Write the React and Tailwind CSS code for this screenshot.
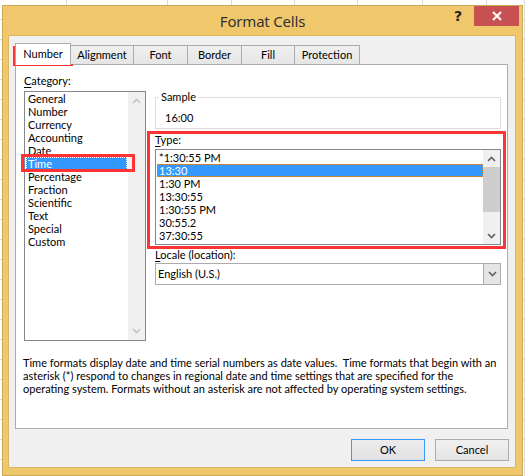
import React from "react";

const FONT = "font-['Lato','Noto_Sans',sans-serif]";

function Chevron({ dir = "up", color = "#606060" }) {
  return (
    <svg width="9" height="6" viewBox="0 0 9 6">
      {dir === "up" ? (
        <polyline points="1,5 4.5,1.5 8,5" fill="none" stroke={color} strokeWidth="1.6" />
      ) : (
        <polyline points="1,1 4.5,4.5 8,1" fill="none" stroke={color} strokeWidth="1.6" />
      )}
    </svg>
  );
}

const categories = [
  "General",
  "Number",
  "Currency",
  "Accounting",
  "Date",
  "Time",
  "Percentage",
  "Fraction",
  "Scientific",
  "Text",
  "Special",
  "Custom",
];

const types = [
  "*1:30:55 PM",
  "13:30",
  "1:30 PM",
  "13:30:55",
  "1:30:55 PM",
  "30:55.2",
  "37:30:55",
];

const gridCols = [67, 101, 64, 63, 63, 65, 64, 38];

export default function App() {
  return (
    <div className={`relative w-[525px] h-[476px] overflow-hidden bg-white text-[11px] text-black ${FONT}`}>
      {/* spreadsheet grid behind the dialog */}
      <div className="flex h-full bg-[repeating-linear-gradient(to_bottom,transparent_0px,transparent_19px,#dadada_19px,#dadada_20px)]">
        {gridCols.map((w, i) => (
          <div key={i} className="h-full border-r border-[#dadada]" style={{ width: w }} />
        ))}
      </div>

      {/* dialog window */}
      <div className="absolute left-[2px] top-[5px] w-[521px] h-[471px] border border-[#c9a858] bg-[#f0c86b] flex flex-col">
        {/* title bar */}
        <div className="relative h-[29px] flex items-center justify-center">
          <span className="text-[15px] text-[#333] leading-none mt-[1px] font-['Noto_Sans',sans-serif] tracking-[-0.2px]">Format Cells</span>
          <div className="absolute right-[3px] top-0 flex items-start">
            <span className="w-[20px] text-center font-bold text-[14px] leading-[20px] text-[#222] mr-[6px] font-['DejaVu_Sans',sans-serif]">?</span>
            <div className="w-[45px] h-[20px] bg-[#c75050] flex items-center justify-center">
              <svg width="10" height="10" viewBox="0 0 10 10">
                <path d="M1 1 L9 9 M9 1 L1 9" stroke="#fff" strokeWidth="2" />
              </svg>
            </div>
          </div>
        </div>

        {/* client area */}
        <div className="ml-[5px] w-[508px] h-[433px] bg-[#f0f0f0] border border-[#d9b764] flex flex-col">
          {/* tabs */}
          <div className="mt-[7px] ml-[6px] h-[21px] flex items-end relative z-10">
            <div className="h-[22px] w-[56px] -mb-[1px] bg-white border border-b-0 border-[#acacac] flex items-center justify-center pb-[1px]">
              Number
            </div>
            {[
              ["Alignment", 63],
              ["Font", 54],
              ["Border", 54],
              ["Fill", 53],
              ["Protection", 65],
            ].map(([t, w]) => (
              <div
                key={t}
                className="h-[19px] border border-b-0 border-l-0 border-[#acacac] bg-[linear-gradient(#f0f0f0,#e5e5e5)] flex items-center justify-center"
                style={{ width: w }}
              >
                {t}
              </div>
            ))}
          </div>

          {/* tab panel */}
          <div className="ml-[6px] w-[493px] h-[365px] bg-white border border-[#acacac] flex flex-col">
            <div className="flex">
              {/* left column */}
              <div className="ml-[8px] w-[122px] flex flex-col">
                <div className="mt-[9px] h-[13px] leading-[13px]">
                  <span className="underline underline-offset-2">C</span>ategory:
                </div>
                <div className="mt-[4px] h-[250px] border border-[#828790] flex">
                  <div className="flex-1 flex flex-col">
                    {categories.map((c) => (
                      <div
                        key={c}
                        className={
                          c === "Time"
                            ? "h-[13px] leading-[13px] pl-[2px] ml-[1px] mr-[1px] bg-[#3399ff] text-white outline outline-1 outline-dotted outline-[#ffffff] -outline-offset-1"
                            : "h-[13px] leading-[13px] pl-[2px] ml-[1px]"
                        }
                      >
                        {c}
                      </div>
                    ))}
                  </div>
                  <div className="w-[17px] bg-[#f0f0f0] flex flex-col justify-between items-center py-[6px]">
                    <Chevron dir="up" color="#c4c4c4" />
                    <Chevron dir="down" color="#c4c4c4" />
                  </div>
                </div>
              </div>

              {/* right column */}
              <div className="ml-[9px] w-[346px] flex flex-col">
                <div className="relative mt-[32px] h-[32px] border border-[#dcdcdc]">
                  <span className="absolute left-[3px] -top-[8px] bg-white px-[2px] leading-[13px]">Sample</span>
                  <div className="absolute left-[9px] top-[13px] leading-[13px]">16:00</div>
                </div>

                <div className="mt-[4px] h-[13px] leading-[13px]">
                  <span className="underline underline-offset-2">T</span>ype:
                </div>
                <div className="mt-[3px] h-[96px] border border-[#828790] flex">
                  <div className="flex-1 flex flex-col pt-[1px]">
                    {types.map((t) => (
                      <div
                        key={t}
                        className={
                          t === "13:30"
                            ? "h-[13px] pl-[1px] ml-[1px] bg-[#3399ff] text-white border border-dotted border-[#d08a3a] leading-[11px]"
                            : "h-[13px] leading-[13px] pl-[2px] ml-[1px]"
                        }
                      >
                        {t}
                      </div>
                    ))}
                  </div>
                  <div className="w-[17px] bg-[#f0f0f0] flex flex-col">
                    <div className="h-[17px] flex items-center justify-center">
                      <Chevron dir="up" />
                    </div>
                    <div className="h-[45px] bg-[#cdcdcd]" />
                    <div className="flex-1" />
                    <div className="h-[17px] flex items-center justify-center">
                      <Chevron dir="down" />
                    </div>
                  </div>
                </div>

                <div className="mt-[3px] h-[13px] leading-[13px]">
                  <span className="underline underline-offset-2">L</span>ocale (location):
                </div>
                <div className="mt-[2px] h-[22px] border border-[#acacac] flex">
                  <div className="flex-1 pl-[2px] leading-[20px]">English (U.S.)</div>
                  <div className="w-[17px] bg-[#e5e5e5] border-l border-[#acacac] flex items-center justify-center">
                    <Chevron dir="down" />
                  </div>
                </div>
              </div>
            </div>

            <p className="mt-[15px] ml-[7px] mr-[6px] leading-[13px]">
              Time formats display date and time serial numbers as date values.&nbsp; Time formats that begin with an
              asterisk (*) respond to changes in regional date and time settings that are specified for the
              operating system. Formats without an asterisk are not affected by operating system settings.
            </p>
          </div>

          {/* buttons */}
          <div className="mt-[10px] mr-[6px] flex justify-end gap-[10px]">
            <button className="w-[74px] h-[22px] border border-[#3399ff] bg-[linear-gradient(#ececec,#e2e2e2)] text-[11px]">
              OK
            </button>
            <button className="w-[74px] h-[22px] border border-[#acacac] bg-[linear-gradient(#f0f0f0,#e5e5e5)] text-[11px]">
              Cancel
            </button>
          </div>
        </div>
      </div>

      {/* red annotation boxes */}
      <div className="absolute left-[13px] top-[46px] w-[60px] h-[20px] border-[3px] border-[#f33]" />
      <div className="absolute left-[21px] top-[154px] w-[114px] h-[18px] border-[3px] border-[#f33]" />
      <div className="absolute left-[147px] top-[131px] w-[359px] h-[118px] border-[3px] border-[#f33]" />
    </div>
  );
}
